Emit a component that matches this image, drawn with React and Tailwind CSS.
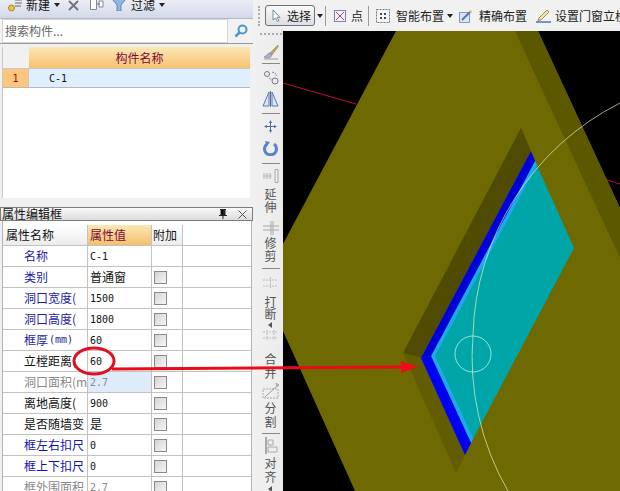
import React from 'react';

const CJK = 'font-["Noto_Sans_CJK_SC","Liberation_Sans",sans-serif]';
const MONO = 'font-["DejaVu_Sans_Mono","Noto_Sans_CJK_SC",monospace] text-[10px]';

const ROWS = [
  { name: '名称', value: 'C-1', color: 'text-[#1c1ca8]', noCheck: true },
  { name: '类别', value: '普通窗', color: 'text-[#1c1ca8]', cjk: true },
  { name: '洞口宽度(', value: '1500', color: 'text-[#1c1ca8]' },
  { name: '洞口高度(', value: '1800', color: 'text-[#1c1ca8]' },
  { name: '框厚', unit: '(mm)', value: '60', color: 'text-[#1c1ca8]' },
  { name: '立樘距离(', value: '60', color: 'text-[#111]' },
  { name: '洞口面积(m', value: '2.7', color: 'text-[#888]', muted: true, shaded: true },
  { name: '离地高度(', value: '900', color: 'text-[#111]' },
  { name: '是否随墙变', value: '是', color: 'text-[#111]', cjk: true },
  { name: '框左右扣尺', value: '0', color: 'text-[#1212b0]' },
  { name: '框上下扣尺', value: '0', color: 'text-[#1212b0]' },
  { name: '框外围面积', value: '2.7', color: 'text-[#888]', muted: true },
];

function Caret({ className = '' }) {
  return (
    <svg width="6" height="4" viewBox="0 0 6 4" className={`shrink-0 ${className}`}>
      <path d="M0 0h6L3 4z" fill="#222" />
    </svg>
  );
}

function Checkbox() {
  return <div className="w-[13px] h-[13px] border border-[#8a8a8a] bg-gradient-to-br from-[#d4d4d4] to-[#f6f6f6]" />;
}

function PropRow({ row }) {
  return (
    <div className="flex h-[21px] shrink-0 border-b border-[#c2c2c2]">
      <div className={`w-[85px] shrink-0 pl-[21px] flex items-center overflow-hidden whitespace-nowrap border-r border-[#c2c2c2] text-xs ${row.color}`}>
        {row.name}
        {row.unit && <span className={`${MONO} ml-px`}>{row.unit}</span>}
      </div>
      <div className={`w-[64px] shrink-0 pl-[2px] flex items-center border-r border-[#c2c2c2] ${row.cjk ? 'text-xs' : MONO} ${row.muted ? 'text-[#888]' : 'text-[#111]'} ${row.shaded ? 'bg-[#deebfa]' : ''}`}>
        {row.value}
      </div>
      <div className="w-[31px] shrink-0 pl-[2px] flex items-center border-r border-[#c2c2c2]">
        {!row.noCheck && <Checkbox />}
      </div>
    </div>
  );
}

function LeftPanel() {
  return (
    <div className="w-[253px] shrink-0 flex flex-col h-full bg-[#f0f0f0]">
      <div className="h-[19px] shrink-0 overflow-hidden bg-gradient-to-b from-[#eceef7] to-[#d3d8e9] border-b border-[#b5b8c4]">
        <div className="flex h-[10px] items-center text-xs text-[#111]">
          <svg width="14" height="14" viewBox="0 0 14 14" className="ml-[8px] shrink-0">
            <path d="M7 2h7M7 5h7M7 8h6" stroke="#666" />
            <circle cx="3.5" cy="10" r="3" fill="#e8c04a" stroke="#b08a20" />
          </svg>
          <span className="ml-[4px] w-[24px]">新建</span>
          <Caret className="ml-[4px]" />
          <svg width="11" height="11" viewBox="0 0 11 11" className="ml-[8px] shrink-0">
            <path d="M1 1l9 9M10 1l-9 9" stroke="#777" strokeWidth="2" />
          </svg>
          <svg width="14" height="12" viewBox="0 0 14 12" className="ml-[11px] shrink-0">
            <path d="M.5.5h6v10h-6zM9 2h4v6H9z" fill="#fff" stroke="#888" />
            <path d="M7 5h3" stroke="#5577aa" />
          </svg>
          <svg width="14" height="12" viewBox="0 0 14 12" className="ml-[8px] shrink-0">
            <path d="M0 0h14L9 6v6H5V6z" fill="#8fb4de" stroke="#5f86b8" />
          </svg>
          <span className="ml-[5px] w-[24px]">过滤</span>
          <Caret className="ml-[4px]" />
        </div>
      </div>

      <div className="h-[25px] shrink-0 flex bg-[#f2f2f2] border-b border-[#9a9a9a]">
        <div className="ml-[2px] w-[226px] h-[24px] bg-white border border-[#d4d4d4] pl-[2px] flex items-center text-xs text-[#666]">
          搜索构件...
        </div>
        <div className="flex-1 flex items-center justify-center">
          <svg width="14" height="14" viewBox="0 0 14 14">
            <circle cx="8.5" cy="5.5" r="4" fill="#e8f3fb" stroke="#4f97c9" strokeWidth="2" />
            <path d="M5.5 8.5L1.5 12.5" stroke="#4f97c9" strokeWidth="2.5" />
          </svg>
        </div>
      </div>

      <div className="h-[151px] shrink-0 mt-[3px] ml-[2px] mr-[3px] bg-white border-l border-[#c8c8c8]">
        <div className="flex h-[22px] border-b border-[#c8c8c8]">
          <div className="w-[26px] bg-[#f1f1f1]" />
          <div className="flex-1 flex items-center justify-center text-xs text-[#7a0a3c] bg-gradient-to-b from-[#fce7b4] to-[#f6c271]">构件名称</div>
        </div>
        <div className="flex h-[19px] border-b border-[#b8b8b8]">
          <div className={`w-[26px] ${MONO} flex items-center justify-center text-[#8a1020] bg-[#fcc77c] border-r border-[#c8c8c8]`}>1</div>
          <div className={`flex-1 ${MONO} flex items-center pl-[20px] text-[#111] bg-[#dfeefc]`}>C-1</div>
        </div>
      </div>

      <div className="h-[9px] shrink-0" />

      <div className="h-[14px] shrink-0 flex items-center border border-[#7d7d7d] bg-gradient-to-b from-[#fafafa] to-[#dcdcdc] text-xs text-[#111] leading-none pl-px">
        <span className="flex-1">属性编辑框</span>
        <svg width="8" height="10" viewBox="0 0 8 10" className="mr-[11px]">
          <path d="M1 .5h6M2 1v5h4V1M0 6.5h8M4 7v3" stroke="#222" />
          <path d="M5 1v5" stroke="#222" strokeWidth="2" />
        </svg>
        <svg width="9" height="9" viewBox="0 0 9 9" className="mr-[5px]">
          <path d="M.5.5l8 8M8.5.5l-8 8" stroke="#555" />
        </svg>
      </div>

      <div className="flex-1 min-h-0 overflow-hidden ml-[2px] mr-px bg-white border-l border-r border-[#b4b4b4] pt-[4px]">
        <div className="flex h-[21px] shrink-0 border-b border-[#c2c2c2] text-xs text-[#111]">
          <div className="w-[85px] shrink-0 pl-[3px] flex items-center border-r border-[#c2c2c2] bg-gradient-to-b from-white to-[#ececec]">属性名称</div>
          <div className="w-[64px] shrink-0 pl-[2px] flex items-center border-r border-[#c2c2c2] text-[#7a0a3c] bg-gradient-to-b from-[#fce7b4] to-[#f5bf6c]">属性值</div>
          <div className="w-[31px] shrink-0 pl-px flex items-center border-r border-[#c2c2c2] bg-gradient-to-b from-white to-[#ececec]">附加</div>
        </div>
        {ROWS.map((row) => <PropRow key={row.name} row={row} />)}
      </div>
    </div>
  );
}

function TopBar() {
  return (
    <div className="h-[31px] shrink-0 flex items-center bg-[#f1f1f1] text-xs text-[#222] whitespace-nowrap overflow-hidden">
      <div className="ml-[5px] w-[3px] h-[20px] shrink-0 border-l-2 border-dotted border-[#aaa]" />
      <div className="ml-[4px] w-[50px] h-[21px] shrink-0 flex items-center rounded-[3px] border border-[#707070] bg-gradient-to-b from-[#fafafa] to-[#dcdfe3]">
        <svg width="9" height="13" viewBox="0 0 9 13" className="ml-[6px] shrink-0">
          <path d="M1 1v10l2.500-2 2 3.500 1.500-1-2-3.200H8z" fill="#fff" stroke="#6d86a8" />
        </svg>
        <span className="ml-[6px]">选择</span>
      </div>
      <Caret className="ml-[2px]" />
      <div className="ml-[2px] w-px h-[20px] shrink-0 bg-[#9a9a9a]" />
      <svg width="12" height="12" viewBox="0 0 12 12" className="ml-[8px] shrink-0">
        <rect x=".5" y=".5" width="11" height="11" fill="#eef0f8" stroke="#7a86b8" />
        <path d="M2 2l8 8M10 2l-8 8" stroke="#c0405a" />
      </svg>
      <span className="ml-[5px] w-[13px]">点</span>
      <div className="ml-[5px] w-px h-[20px] shrink-0 bg-[#9a9a9a]" />
      <svg width="14" height="14" viewBox="0 0 14 14" className="ml-[7px] shrink-0">
        <rect x=".5" y=".5" width="13" height="13" fill="#f4f6fa" stroke="#777" strokeDasharray="2 1" />
        <path d="M4 4h2v2H4zM8 4h2v2H8zM4 8h2v2H4zM8 8h2v2H8z" fill="#445" />
      </svg>
      <span className="ml-[6px] w-[48px]">智能布置</span>
      <Caret className="ml-[3px]" />
      <svg width="14" height="14" viewBox="0 0 14 14" className="ml-[6px] shrink-0">
        <path d="M.5 3.500h10v10H.5z" fill="#dbe6f4" stroke="#7f97b8" />
        <path d="M3 11L11 3" stroke="#5577aa" strokeWidth="2" />
        <path d="M10 1l3 1-1 3z" fill="#e8b84a" />
      </svg>
      <span className="ml-[6px] w-[48px]">精确布置</span>
      <svg width="15" height="15" viewBox="0 0 15 15" className="ml-[9px] shrink-0">
        <path d="M3 10L11 2l2 2-8 8-3 .5z" fill="#f3e3b0" stroke="#9a8a50" />
        <path d="M0 14h15" stroke="#4a6fc0" strokeWidth="1.500" />
      </svg>
      <span className="ml-[4px]">设置门窗立樘</span>
    </div>
  );
}

function SideText({ lines, height, arrow, leading = 'leading-[13px]' }) {
  return (
    <div className={`${height} ${leading} shrink-0 flex flex-col items-center text-xs text-[#555]`}>
      {lines.map((c) => <span key={c}>{c}</span>)}
      {arrow && <span className="mt-[2px] w-0 h-0 border-y-[3px] border-y-transparent border-r-[4px] border-r-[#555]" />}
    </div>
  );
}

function SideIcon({ height, children }) {
  return <div className={`${height} shrink-0 flex items-center justify-center`}>{children}</div>;
}

function SideDivider() {
  return <div className="w-[18px] h-px shrink-0 bg-[#888]" />;
}

function SideBar() {
  return (
    <div className="w-[30px] shrink-0 h-full flex flex-col items-center pl-[5px] bg-gradient-to-r from-[#f1f1f1] to-[#ebebeb] overflow-hidden">
      <div className="w-[22px] h-[7px] shrink-0 border-t-2 border-dotted border-[#aaa] mt-[2px]" />
      <SideIcon height="h-[23px]">
        <svg width="16" height="16" viewBox="0 0 16 16">
          <path d="M15 1L7 9l2 2 6-8z" fill="#c9a35a" stroke="#8a7040" strokeWidth=".5" />
          <path d="M7 9c-3 0-3 3-6 4 3 2 7 1 8-2z" fill="#aab4c6" stroke="#667" strokeWidth=".5" />
          <path d="M1 15h14" stroke="#9a9aa8" />
        </svg>
      </SideIcon>
      <SideDivider />
      <SideIcon height="h-[25px]">
        <svg width="16" height="16" viewBox="0 0 16 16" fill="none" stroke="#778">
          <circle cx="4" cy="5" r="2.500" />
          <circle cx="12" cy="12" r="3" />
          <path d="M9 3l3 1 2 3M6 9l3 2" strokeDasharray="2 1" stroke="#7088b0" />
        </svg>
      </SideIcon>
      <SideIcon height="h-[19px]">
        <svg width="17" height="16" viewBox="0 0 17 16" fill="none" stroke="#5a7ab8">
          <path d="M7 1v14H1zM10 1v14h6z" fill="#dbe4f4" />
          <path d="M8.500 0v16" stroke="#667" />
        </svg>
      </SideIcon>
      <div className="h-[5px] shrink-0" />
      <SideDivider />
      <SideIcon height="h-[24px]">
        <svg width="15" height="15" viewBox="0 0 15 15" fill="#4a6f9a">
          <path d="M7 4h1v3h3V6l3 1.500L11 9V8H8v3h1l-1.500 3L6 11h1V8H4v1L1 7.500 4 6v1h3V4H6l1.500-3L9 4z" />
        </svg>
      </SideIcon>
      <SideIcon height="h-[20px]">
        <svg width="15" height="15" viewBox="0 0 15 15" fill="none">
          <path d="M4 3a6 6 0 1 0 7 0" stroke="#5b80cf" strokeWidth="3" />
          <path d="M2 0l5 1-3 4z" fill="#5b80cf" />
        </svg>
      </SideIcon>
      <div className="h-[5px] shrink-0" />
      <SideDivider />
      <SideIcon height="h-[23px]">
        <svg width="17" height="14" viewBox="0 0 17 14" fill="none" stroke="#aaa">
          <path d="M13 .5h3v13h-3zM1 7h9" />
          <path d="M1 5h9M1 9h9" strokeDasharray="2 1" />
        </svg>
      </SideIcon>
      <SideText lines={['延', '伸']} height="h-[26px]" />
      <SideIcon height="h-[23px] pt-[6px]">
        <svg width="17" height="14" viewBox="0 0 17 14" fill="none" stroke="#aaa">
          <path d="M9 0v14M11 0v14M1 5h16M1 9h16" />
        </svg>
      </SideIcon>
      <SideText lines={['修', '剪']} height="h-[32px]" />
      <SideDivider />
      <SideIcon height="h-[27px]">
        <svg width="17" height="12" viewBox="0 0 17 12" fill="none" stroke="#bbb">
          <path d="M1 3h15M1 9h15M8.500 0v12" strokeDasharray="2 1" />
        </svg>
      </SideIcon>
      <SideText lines={['打', '断']} height="h-[30px]" arrow leading="leading-[12px]" />
      <SideIcon height="h-[26px] pb-[8px]">
        <svg width="17" height="10" viewBox="0 0 17 10" fill="none" stroke="#bbb">
          <path d="M1 2h15M1 8h15M5 0v10M12 0v10" strokeDasharray="2 1" />
        </svg>
      </SideIcon>
      <SideText lines={['合', '并']} height="h-[28px]" leading="leading-[14px]" />
      <SideIcon height="h-[21px]">
        <svg width="18" height="17" viewBox="0 0 18 17" fill="none" stroke="#aaa">
          <path d="M1 7h15v9H1z" strokeDasharray="2 1" />
          <path d="M3 15L16 3" stroke="#999" />
          <path d="M14 1l3 2-2 2z" fill="#bbb" />
        </svg>
      </SideIcon>
      <SideText lines={['分', '割']} height="h-[32px]" leading="leading-[14px]" />
      <SideDivider />
      <SideIcon height="h-[22px]">
        <svg width="14" height="17" viewBox="0 0 14 17" fill="none" stroke="#aaa">
          <path d="M2 0v17" strokeWidth="2" />
          <path d="M4 3h5v5H4zM4 10h9v5H4z" />
        </svg>
      </SideIcon>
      <SideText lines={['对', '齐']} height="h-[28px]" arrow leading="leading-[14px]" />
    </div>
  );
}

function Canvas() {
  return (
    <svg viewBox="283 31 337 460" className="flex-1 min-w-0 h-full block bg-black">
      <path d="M283 83L356 104M601 178L620 184" stroke="#c01030" strokeWidth="1" fill="none" />
      <path d="M396 31H538L620 208V491H355L283 331V244Z" fill="#6e6900" />
      <path d="M515 31H538L620 208V258Z" fill="#5c5800" />
      <path d="M521 128L403 353L421 358L531 151Z" fill="#4f4b00" />
      <path d="M403 353L456 473L465 455L421 358Z" fill="#625d00" />
      <path d="M535 161L574 248L471 443L431 356Z" fill="#00a5a8" />
      <path d="M535 161L431 356L471 443L473 438L435 356L537 165Z" fill="#1ea8f0" />
      <path d="M421 358L531 151L535 161L431 356Z" fill="#0000d8" />
      <path d="M421 358L431 356L471 443L465 455Z" fill="#0000f4" />
      <path d="M620 103A268 268 0 0 0 473 335A268 268 0 0 0 508 491" fill="none" stroke="#e6ecc0" strokeOpacity=".7" strokeWidth="1" />
      <circle cx="473" cy="354" r="18" fill="none" stroke="#bdf0e8" strokeOpacity=".8" strokeWidth="1" />
    </svg>
  );
}

export default function App() {
  return (
    <div className={`relative flex w-[620px] h-[491px] overflow-hidden bg-[#f0f0f0] ${CJK}`}>
      <LeftPanel />
      <div className="flex-1 min-w-0 flex flex-col h-full">
        <TopBar />
        <div className="flex-1 min-h-0 flex">
          <SideBar />
          <Canvas />
        </div>
      </div>
      {/* red note drawn over the screenshot */}
      <svg className="absolute inset-0 pointer-events-none" width="620" height="491" viewBox="0 0 620 491">
        <ellipse cx="94" cy="361" rx="20" ry="13" fill="none" stroke="#e01020" strokeWidth="3" />
        <path d="M112 369L402 367" stroke="#e80c18" strokeWidth="3" fill="none" />
        <path d="M401 361L418 367L401 373Z" fill="#ee0c18" />
      </svg>
    </div>
  );
}
